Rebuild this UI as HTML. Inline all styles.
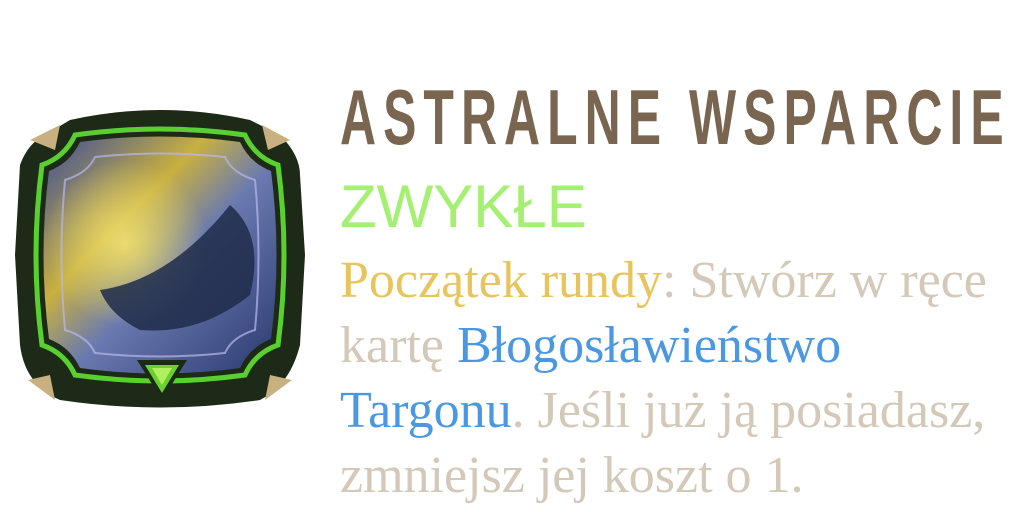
<!DOCTYPE html>
<html><head><meta charset="utf-8"><style>
html,body{margin:0;padding:0;background:#fff;width:1024px;height:512px;overflow:hidden;position:relative}
.t{position:absolute;left:340px;top:72px;font-family:"Liberation Sans",sans-serif;font-weight:bold;font-size:78px;color:#7a6650;letter-spacing:11px;white-space:nowrap;transform:scaleX(0.64);transform-origin:0 0}
.r{position:absolute;left:340px;top:172px;font-family:"Liberation Sans",sans-serif;font-size:60px;color:#a4f070;white-space:nowrap}
.l{position:absolute;left:340px;font-family:"Liberation Serif",serif;font-size:52px;color:#d4c8b8;white-space:nowrap;line-height:60px}
.g{color:#e8c45c}.b{color:#4a98e4}
</style></head><body>
<svg width="320" height="320" style="position:absolute;left:0;top:95px" viewBox="0 0 320 320">
<defs>
<linearGradient id="sky" x1="0" y1="0" x2="1" y2="1">
<stop offset="0" stop-color="#3a4a9a"/><stop offset="0.35" stop-color="#c8b040"/><stop offset="0.55" stop-color="#6a7ab0"/><stop offset="1" stop-color="#2a3a70"/></linearGradient>
<radialGradient id="glow" cx="0.35" cy="0.45" r="0.35"><stop offset="0" stop-color="#f0e070" stop-opacity="0.9"/><stop offset="1" stop-color="#f0e070" stop-opacity="0"/></radialGradient>
</defs>
<path d="M45 40 L70 25 Q160 5 250 25 L280 40 Q300 60 300 80 L305 160 L300 250 Q290 290 260 305 Q160 320 60 305 Q25 290 20 250 L15 160 L20 70 Q28 48 45 40Z" fill="#1e2a18"/>
<path d="M30 45 L60 30 L55 55Z M290 45 L262 30 L268 55Z M28 285 L55 305 L50 280Z M292 285 L265 305 L270 280Z" fill="#c8b080"/>
<path d="M75 40 Q160 28 245 40 Q255 62 278 70 Q290 160 278 250 Q255 258 245 280 Q160 292 75 280 Q65 258 42 250 Q30 160 42 70 Q65 62 75 40Z" fill="none" stroke="#5ad030" stroke-width="5"/>
<path d="M80 47 Q160 36 240 47 Q250 68 271 76 Q282 160 271 244 Q250 252 240 273 Q160 284 80 273 Q70 252 49 244 Q38 160 49 76 Q70 68 80 47Z" fill="url(#sky)"/>
<path d="M80 47 Q160 36 240 47 Q250 68 271 76 Q282 160 271 244 Q250 252 240 273 Q160 284 80 273 Q70 252 49 244 Q38 160 49 76 Q70 68 80 47Z" fill="url(#glow)"/>
<path d="M100 195 Q170 185 230 110 Q265 140 250 200 Q200 240 140 235 Q110 220 100 195Z" fill="#1e2c4a" opacity="0.85"/>
<path d="M95 62 Q160 55 225 62 Q232 78 255 85 Q262 160 255 235 Q232 242 225 258 Q160 265 95 258 Q88 242 65 235 Q58 160 65 85 Q88 78 95 62Z" fill="none" stroke="#b8b8f0" stroke-width="2" opacity="0.7"/>
<path d="M137 265 L187 265 L162 305Z" fill="#1a2a14"/>
<path d="M145 270 L179 270 L162 298Z" fill="#6ad030"/>
<path d="M152 273 L172 273 L162 290Z" fill="#b0f060"/>
</svg>
<div class="t">ASTRALNE WSPARCIE</div>
<div class="r">ZWYKŁE</div>
<div class="l" style="top:251px"><span class="g">Początek rundy</span>: Stwórz w ręce</div>
<div class="l" style="top:316px">kartę <span class="b">Błogosławieństwo</span></div>
<div class="l" style="top:381px"><span class="b">Targonu</span>. Jeśli już ją posiadasz,</div>
<div class="l" style="top:446px">zmniejsz jej koszt o 1.</div>
</body></html>
